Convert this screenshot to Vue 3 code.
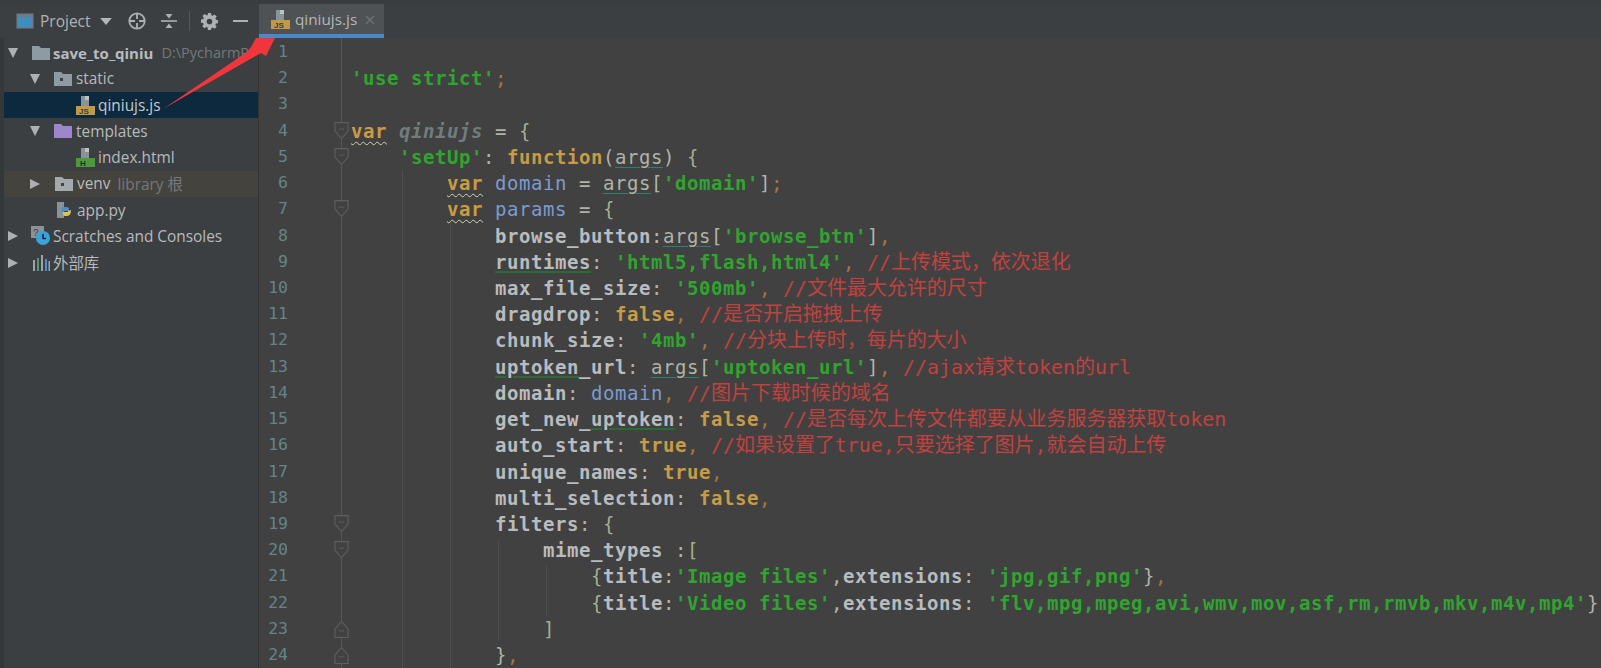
<script setup>
const lines = [
  [],
  [['s',"'use strict'"],['pc',';']],
  [],
  [['k w','var'],['p',' '],['i','qiniujs'],['p',' = '],['b','{']],
  [['p','    '],['s',"'setUp'"],['p',': '],['k','function'],['p','('],['p a','args'],['p',') '],['b','{']],
  [['p','        '],['k w','var'],['p',' '],['v','domain'],['p',' = '],['p a','args'],['p','['],['s',"'domain'"],['p',']'],['pc',';']],
  [['p','        '],['k w','var'],['p',' '],['v','params'],['p',' = '],['b','{']],
  [['p','            '],['n','browse_button'],['p',':'],['p a','args'],['p','['],['s',"'browse_btn'"],['p',']'],['pc',',']],
  [['p','            '],['n g','runtimes'],['p',': '],['s',"'html5,flash,html4'"],['pc',','],['c',' //上传模式，依次退化']],
  [['p','            '],['n','max_file_size'],['p',': '],['s',"'500mb'"],['pc',','],['c',' //文件最大允许的尺寸']],
  [['p','            '],['n','dragdrop'],['p',': '],['k','false'],['pc',','],['c',' //是否开启拖拽上传']],
  [['p','            '],['n','chunk_size'],['p',': '],['s',"'4mb'"],['pc',','],['c',' //分块上传时，每片的大小']],
  [['p','            '],['n g','uptoken'],['n','_url'],['p',': '],['p a','args'],['p','['],['s',"'uptoken_url'"],['p',']'],['pc',','],['c',' //ajax请求token的url']],
  [['p','            '],['n','domain'],['p',': '],['v','domain'],['pc',','],['c',' //图片下载时候的域名']],
  [['p','            '],['n','get_new_'],['n g','uptoken'],['p',': '],['k','false'],['pc',','],['c',' //是否每次上传文件都要从业务服务器获取token']],
  [['p','            '],['n','auto_start'],['p',': '],['k','true'],['pc',','],['c',' //如果设置了true,只要选择了图片,就会自动上传']],
  [['p','            '],['n','unique_names'],['p',': '],['k','true'],['pc',',']],
  [['p','            '],['n','multi_selection'],['p',': '],['k','false'],['pc',',']],
  [['p','            '],['n','filters'],['p',': '],['b','{']],
  [['p','                '],['n','mime_types'],['p',' :'],['b','[']],
  [['p','                    '],['b','{'],['n','title'],['p',':'],['s',"'Image files'"],['p',','],['n','extensions'],['p',': '],['s',"'jpg,gif,png'"],['p','}'],['pc',',']],
  [['p','                    '],['b','{'],['n','title'],['p',':'],['s',"'Video files'"],['p',','],['n','extensions'],['p',': '],['s',"'flv,mpg,mpeg,avi,wmv,mov,asf,rm,rmvb,mkv,m4v,mp4'"],['p','}']],
  [['p','                '],['b',']']],
  [['p','            }'],['pc',',']],
]
const folds = [
  { i: 3, up: false }, { i: 4, up: false }, { i: 6, up: false }, { i: 18, up: false },
  { i: 19, up: false }, { i: 22, up: true }, { i: 23, up: true },
]
const foldAt = (i) => folds.find((f) => f.i === i)
</script>

<template>
  <div class="app">
    <div class="topstrip"></div>
    <div class="tabs">
      <div class="toolbar">
        <svg class="pi" viewBox="0 0 18 16" width="18" height="16"><rect x="0.5" y="0.5" width="17" height="15" fill="#6e7b84"/><rect x="2" y="4" width="14" height="10" fill="#3d8fc0"/></svg>
        <span class="ptitle">Project</span>
        <svg viewBox="0 0 10 6" width="12" height="7" class="caret"><path d="M0 0h10L5 6z" fill="#b4b7b9"/></svg>
        <svg viewBox="0 0 18 18" width="18" height="18" class="t1"><circle cx="9" cy="9" r="7.700" fill="none" stroke="#aeb1b3" stroke-width="1.800"/><path d="M9 2v5M9 11v5M2 9h5M11 9h5" stroke="#aeb1b3" stroke-width="1.800"/></svg>
        <svg viewBox="0 0 16 16" width="16" height="16" class="t2"><path d="M0 8h16" stroke="#aeb1b3" stroke-width="1.600"/><path d="M4.500 1h7L8 5.500zM4.500 15h7L8 10.500z" fill="#aeb1b3"/></svg>
        <span class="sep"></span>
        <svg viewBox="0 0 18 18" width="17" height="17" class="t3"><path fill-rule="evenodd" d="M7.400 0h3.200l.4 2.400 1.400.6 2-1.400 2.200 2.200-1.400 2 .6 1.400 2.400.4v3.200l-2.400.4-.6 1.400 1.400 2-2.200 2.200-2-1.400-1.400.6-.4 2.400H7.400L7 15.400l-1.400-.6-2 1.400L1.400 14l1.400-2-.6-1.400L0 10.200V7l2.400-.4.6-1.400-1.400-2L3.800 1l2 1.400L7 2.400zM9 6a3 3 0 100 6 3 3 0 000-6z" fill="#aeb1b3"/></svg>
        <span class="minus"></span>
      </div>
      <div class="tab">
        <svg viewBox="0 0 20 22" width="20" height="22" class="jsicon"><path d="M5 0h8v10H5z" fill="#8a9399"/><path d="M9 0h4v4H9z" fill="#bcc1c4"/><rect x="0" y="10" width="19" height="9" fill="#c09a45"/><text x="3" y="18" font-size="8" font-weight="700" font-family="Liberation Sans" fill="#3c3f41">JS</text></svg>
        <span>qiniujs.js</span>
        <span class="close">×</span>
      </div>
    </div>
    <div class="main">
      <aside class="tree">
        <div class="row"><span class="arrow down"></span>
          <svg class="folder" viewBox="0 0 18 14" width="18" height="14"><path d="M0 0h7l2 2h9v12H0z" fill="#8f9ba3"/></svg>
          <b class="root">save_to_qiniu</b><span class="dim path">D:\PycharmPr</span>
        </div>
        <div class="row l1"><span class="arrow down"></span>
          <svg class="folder" viewBox="0 0 18 14" width="18" height="14"><path d="M0 0h7l2 2h9v12H0z" fill="#8f9ba3"/><rect x="6" y="6" width="3" height="3" fill="#3c3f41"/></svg>
          <span>static</span>
        </div>
        <div class="row l2 sel">
          <svg viewBox="0 0 20 22" width="20" height="22" class="fi"><path d="M5 0h8v10H5z" fill="#8a9399"/><path d="M9 0h4v4H9z" fill="#bcc1c4"/><rect x="0" y="10" width="19" height="9" fill="#c09a45"/><text x="3" y="18" font-size="8" font-weight="700" font-family="Liberation Sans" fill="#3c3f41">JS</text></svg>
          <span>qiniujs.js</span>
        </div>
        <div class="row l1"><span class="arrow down"></span>
          <svg class="folder" viewBox="0 0 18 14" width="18" height="14"><path d="M0 0h7l2 2h9v12H0z" fill="#9d86c9"/></svg>
          <span>templates</span>
        </div>
        <div class="row l2">
          <svg viewBox="0 0 20 22" width="20" height="22" class="fi"><path d="M5 0h8v10H5z" fill="#8a9399"/><path d="M9 0h4v4H9z" fill="#bcc1c4"/><rect x="0" y="10" width="19" height="9" fill="#4d9a3c"/><text x="4" y="18" font-size="8" font-weight="700" font-family="Liberation Sans" fill="#2b2b2b">H</text></svg>
          <span>index.html</span>
        </div>
        <div class="row l1 venv"><span class="arrow right"></span>
          <svg class="folder" viewBox="0 0 18 14" width="18" height="14"><path d="M0 0h7l2 2h9v12H0z" fill="#a3a9ac"/><rect x="6" y="6" width="3" height="3" fill="#45433d"/></svg>
          <span>venv</span><span class="dim lib">library 根</span>
        </div>
        <div class="row l3">
          <svg viewBox="0 0 20 20" width="20" height="20" class="pyi"><path d="M2 2h7v16H2z" fill="#8a9399"/><path d="M6 10c0-3 2-3 4-3s4 0 4 2v2H9v1H6z" fill="#4a90c2"/><path d="M16 10c0 3-1 6-4 6s-4 0-4-2v-2h5v-1z" fill="#e0c14d"/></svg>
          <span>app.py</span>
        </div>
        <div class="row l0"><span class="arrow right"></span>
          <svg viewBox="0 0 20 20" width="20" height="20" class="sci"><rect x="0" y="0" width="13" height="12" fill="#8a9399"/><text x="2" y="10" font-size="10" fill="#3c3f41" font-family="Liberation Mono">?</text><circle cx="12" cy="12" r="7" fill="#39a3dc"/><path d="M12 8v4.500h3" stroke="#123" stroke-width="1.500" fill="none"/></svg>
          <span>Scratches and Consoles</span>
        </div>
        <div class="row l0"><span class="arrow right"></span>
          <svg viewBox="0 0 18 16" width="18" height="16" class="libi"><path d="M1 5h2v11H1z" fill="#9aa3a8"/><path d="M5 3h2v13H5z" fill="#4f9a6a"/><path d="M9 0h2v16H9z" fill="#9aa3a8"/><path d="M13 4h2v12h-2z" fill="#4a90c2"/><path d="M16.500 6h1.500v10h-1.500z" fill="#9aa3a8"/></svg>
          <span>外部库</span>
        </div>
      </aside>
      <section class="editor">
        <div class="gutter">
          <div v-for="(l, i) in lines" :key="i" class="ln">{{ i + 1 }}</div>
        </div>
        <div class="marks">
          <div v-for="(l, i) in lines" :key="i" class="mk">
            <svg v-if="foldAt(i)" viewBox="0 0 16 20" width="15" height="20" class="fold" :class="{ flip: foldAt(i).up }">
              <path d="M1 1h14v9l-7 8-7-8z" fill="#414141" stroke="#5d5f60" stroke-width="1.200"/>
              <path d="M5 8h6" stroke="#5d5f60"/>
            </svg>
          </div>
        </div>
        <div class="code">
          <span class="guide g1"></span><span class="guide g2"></span>
          <span class="guide g4"></span><span class="guide g5"></span>
          <div v-for="(l, i) in lines" :key="i" class="cl"><span v-for="(t, j) in l" :key="j" :class="t[0]">{{ t[1] }}</span></div>
        </div>
      </section>
    </div>
    <svg class="redarrow" viewBox="0 0 1601 668" width="1601" height="668">
      <path d="M163 109L247 52 251 47 256 38 275 38 266 56 261 53z" fill="#f0363c"/>
    </svg>
  </div>
</template>

<style>
html, body { margin: 0; background: #3c3f41; overflow: hidden; }
</style>

<style scoped>
.app { position: relative; width: 1601px; height: 668px; overflow: hidden; background: #414141; font-family: "Open Sans", "Noto Sans CJK SC", sans-serif; color: #b9bcbe; }
.topstrip { height: 4px; background: #3a3c3e; }
.tabs { display: flex; height: 34px; background: #3c3f41; }
.toolbar { width: 259px; display: flex; align-items: center; padding-left: 16px; box-sizing: border-box; }
.ptitle { font-size: 15.500px; margin-left: 6px; color: #b0b3b5; }
.caret { margin-left: 9px; }
.t1 { margin-left: 16px; }
.t2 { margin-left: 15px; }
.sep { width: 1px; height: 20px; background: #55585a; margin-left: 12px; }
.t3 { margin-left: 11px; }
.minus { width: 15px; height: 2px; background: #aeb1b3; margin-left: 15px; }
.tab { width: 125px; height: 34px; box-sizing: border-box; background: #4e5254; border-bottom: 4px solid #4a88c7; display: flex; align-items: center; font-size: 15.300px; color: #b4b7b9; padding-left: 12px; }
.jsicon { margin-right: 4px; margin-top: 3px; }
.close { margin-left: 7px; font-size: 20px; color: #6e7173; }
.main { display: flex; height: 630px; }
.tree { width: 259px; flex: none; background: #3c3f41; border-right: 1px solid #323232; box-sizing: border-box; padding-top: 1.500px; border-left: 4px solid #35383a; overflow: hidden; font-size: 15.400px; }
.row { height: 26.250px; display: flex; align-items: center; white-space: nowrap; padding-left: 4px; box-sizing: border-box; color: #b7babc; }
.row.l1 { padding-left: 26px; }
.row.l2 { padding-left: 72px; }
.row.l3 { padding-left: 51px; }
.row.l0 { padding-left: 4px; }
.sel { background: #0d293e; color: #c5c8ca; }
.venv { background: #45433d; }
.arrow { width: 0; height: 0; display: inline-block; flex: none; margin-right: 8px; }
.arrow.down { border-left: 5.500px solid transparent; border-right: 5.500px solid transparent; border-top: 10px solid #aeb1b3; }
.arrow.right { border-top: 5.500px solid transparent; border-bottom: 5.500px solid transparent; border-left: 10px solid #aeb1b3; margin-right: 9px; }
.folder { margin: 0 4px 0 6px; flex: none; }
.row:first-child .folder { margin-right: 3px; }
.root { font-weight: 700; color: #b9bcbe; font-size: 15px; }
.dim { color: #75787a; }
.path { margin-left: 8px; font-size: 14.500px; min-width: 0; overflow: hidden; }
.lib { margin-left: 7px; }
.fi { margin: 3px 2px 0 0; flex: none; }
.pyi { margin-right: 2px; flex: none; }
.sci { margin-right: 2px; margin-left: 4px; flex: none; }
.libi { margin-right: 3px; margin-left: 5px; flex: none; }
.editor { flex: 1; display: flex; min-width: 0; background: #414141; }
.gutter { width: 46px; flex: none; box-sizing: border-box; text-align: right; padding-right: 17px; padding-top: 1px; font-family: "DejaVu Sans Mono", monospace; font-size: 16.500px; color: #64858a; }
.ln { height: 26.220px; line-height: 26.220px; }
.marks { width: 46px; flex: none; padding-top: 1px; background: linear-gradient(#565656, #565656) 36px 0 / 1px 100% no-repeat; }
.mk { height: 26.220px; display: flex; align-items: center; padding-left: 29px; }
.fold.flip { transform: scaleY(-1); }
.code { flex: 1; min-width: 0; overflow: hidden; position: relative; padding-top: 1px; font-family: "DejaVu Sans Mono", "Noto Sans CJK SC", monospace; font-size: 19px; letter-spacing: 0.560px; white-space: pre; font-weight: 400; }
.cl { height: 26.220px; line-height: 26.220px; color: #b7b9bb; }
.s { color: #2fa52f; font-weight: 700; }
.k { color: #c99b45; font-weight: 700; }
.pc { color: #a9743c; }
.i { color: #6f7d7f; font-style: italic; font-weight: 700; }
.v { color: #7b9bd0; }
.n { color: #b9bcbe; font-weight: 700; }
.p { color: #b0b3a8; }
.b { color: #a8ad90; }
.c { color: #c2413f; font-size: 20px; letter-spacing: -0.040px; }
.w { text-decoration: underline wavy #d5d2b8 1px; text-underline-offset: 3px; }
.a { text-decoration: underline solid #2f7f74 1px; text-underline-offset: 3px; }
.g { text-decoration: underline solid #2a6b34 2px; text-underline-offset: 2px; }
.guide { position: absolute; width: 1px; background: #4f4f4f; }
.g1 { left: 51px; top: 132px; height: 498px; }
.g2 { left: 99px; top: 184px; height: 446px; }
.g4 { left: 147px; top: 503px; height: 99px; }
.g5 { left: 195px; top: 528px; height: 51px; }
.redarrow { position: absolute; left: 0; top: 0; pointer-events: none; }
</style>
